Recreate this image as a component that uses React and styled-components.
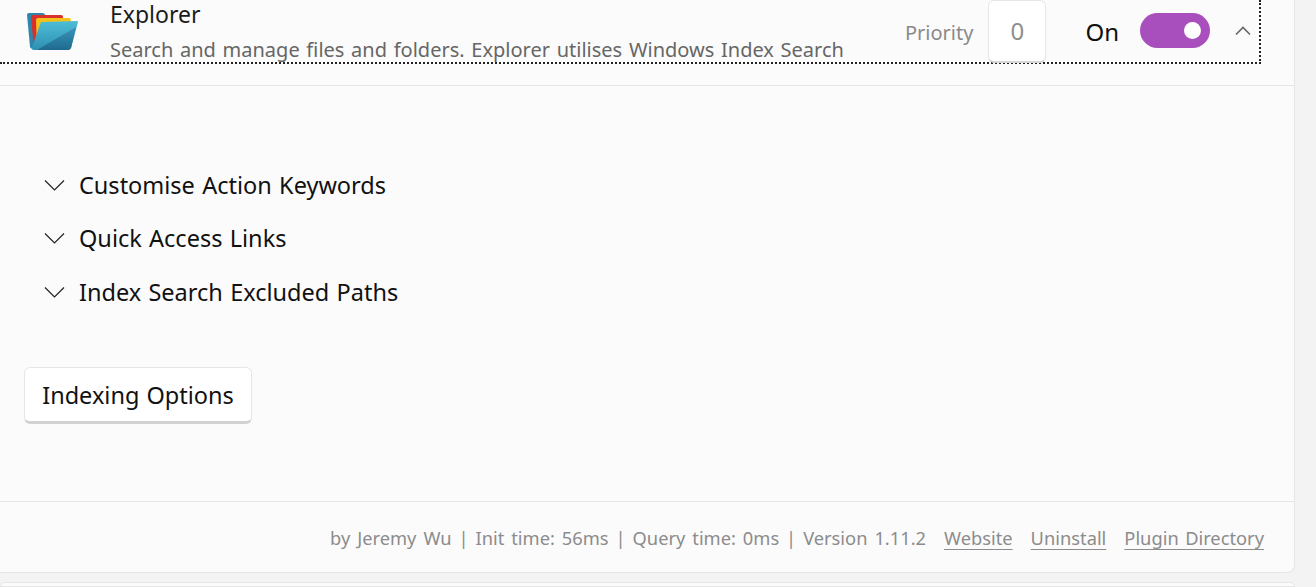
import React from 'react';
import styled, { createGlobalStyle } from 'styled-components';

const GlobalStyle = createGlobalStyle`
  html, body {
    margin: 0;
    background: #f3f3f3;
    font-family: "Noto Sans", "Noto Sans CJK KR", sans-serif;
  }
`;
const Page = styled.div`
  display: flex;
  flex-direction: column;
  height: 587px;
  overflow: hidden;
  width: 1316px;
`;
const Panel = styled.section`
  background: #fbfbfb;
  border-bottom: 1px solid #e5e5e5;
  border-bottom-right-radius: 8px;
  border-right: 1px solid #e5e5e5;
  box-sizing: border-box;
  display: flex;
  flex: none;
  flex-direction: column;
  height: 573px;
  width: 1295px;
`;
const HeaderZone = styled.div`
  border-bottom: 1px solid #e6e6e6;
  box-sizing: border-box;
  flex: none;
  height: 86px;
`;
const Header = styled.header`
  align-items: center;
  border-bottom: 2px dotted #222;
  border-right: 2px dotted #222;
  box-sizing: border-box;
  display: flex;
  height: 64px;
  padding-left: 26px;
  width: 1261px;
`;
const Info = styled.div`
  display: flex;
  flex: 1;
  flex-direction: column;
  margin-left: 32px;
  margin-top: 3px;
`;
const Title = styled.div`
  color: #1b1b1b;
  font-size: 23px;
  line-height: 30px;
  margin-bottom: 4px;
`;
const Description = styled.div`
  color: #666;
  font-size: 20px;
  line-height: 34px;
  white-space: nowrap;
  word-spacing: 1.5px;
`;
const PriorityLabel = styled.span`
  color: #8a8a8a;
  font-size: 20px;
  margin-right: 15px;
  margin-top: 3px;
`;
const PriorityBox = styled.div`
  align-items: center;
  background: #fff;
  border: 1px solid #e6e6e6;
  border-bottom: 2px solid #d6d6d6;
  border-radius: 6px;
  box-sizing: border-box;
  color: #8e8e8e;
  display: flex;
  font-size: 24px;
  height: 63px;
  justify-content: center;
  margin-right: 39px;
  width: 58px;
`;
const SwitchLabel = styled.span`
  color: #111;
  font-size: 24px;
  margin-right: 21px;
`;
const Switch = styled.div`
  align-items: center;
  background: #a94fbd;
  border-radius: 18px;
  box-sizing: border-box;
  display: flex;
  height: 35px;
  justify-content: flex-end;
  margin-top: -2px;
  padding-right: 9px;
  width: 70px;
`;
const Knob = styled.span`
  background: #fff;
  border-radius: 50%;
  height: 17px;
  width: 17px;
`;
const Collapse = styled.svg`
  display: block;
  height: 10px;
  margin: 0 8px 0 25px;
  width: 16px;
`;
const Body = styled.div`
  display: flex;
  flex: 1;
  flex-direction: column;
  padding: 72px 0 0 24px;
`;
const ExpanderRow = styled.div`
  align-items: center;
  color: #111;
  display: flex;
  font-size: 23.5px;
  height: 53.5px;
  word-spacing: 1.2px;
`;
const Chevron = styled.svg`
  display: block;
  flex: none;
  height: 12px;
  margin: 0 14px 0 20px;
  width: 21px;
`;
const IndexButton = styled.button`
  background: #fff;
  border: 1px solid #e6e6e6;
  border-bottom: 3px solid #d2d2d2;
  border-radius: 6px;
  box-sizing: border-box;
  color: #111;
  font-family: inherit;
  font-size: 23.5px;
  height: 57px;
  margin-top: 48.5px;
  padding: 0;
  width: 228px;
  word-spacing: 1px;
`;
const Footer = styled.footer`
  align-items: center;
  border-top: 1px solid #e6e6e6;
  box-sizing: border-box;
  color: #8c8c8c;
  display: flex;
  flex: none;
  font-size: 18.3px;
  height: 71px;
  justify-content: flex-end;
  padding-right: 30px;
  padding-top: 1px;
  word-spacing: 1.7px;
`;
const FooterStats = styled.span`
  word-spacing: 2.2px;
`;
const FooterLink = styled.a`
  color: #8c8c8c;
  margin-left: 18px;
  text-decoration: underline;
  text-underline-offset: 4px;
`;
const NextCard = styled.div`
  background: #fbfbfb;
  border: 1px solid #e5e5e5;
  border-radius: 8px 8px 0 0;
  box-sizing: border-box;
  height: 20px;
  margin-top: 9px;
  width: 1295px;
`;

const FolderIcon = () => (
  <svg width="52" height="40" viewBox="0 0 52 40" style={{ flex: 'none' }}>
    <defs>
      <linearGradient id="front" x1="0" y1="0" x2="0" y2="1">
        <stop offset="0" stopColor="#4dbdd6" />
        <stop offset="1" stopColor="#2f8fb4" />
      </linearGradient>
      <linearGradient id="shade" x1="0" y1="0" x2="0" y2="1">
        <stop offset="0" stopColor="#3a95b8" />
        <stop offset="1" stopColor="#1f6a90" />
      </linearGradient>
    </defs>
    <path d="M1 4q0-2 2-2h13q3 0 3 2v34H7q-2 0-3-2z" fill="#2f86ad" />
    <path d="M5 6q0-2 2-2h28q2 0 2 2v12H12L8 38z" fill="#d9302c" />
    <path d="M10 9q0-2 2-2h31q2 0 2 3v8H15l-4 20z" fill="#f5c21a" />
    <path d="M15 11l36-1q1 0 1 1l-7 26q-1 2-3 2H8q-3 0-2-3z" fill="url(#front)" />
    <path d="M11 39L50 16l-5 21q-1 2-3 2z" fill="url(#shade)" />
  </svg>
);

const ChevronDown = () => (
  <Chevron viewBox="0 0 21 12" fill="none" stroke="#222" strokeWidth="1.2">
    <path d="M1 1.5l9.5 9.5 9.5-9.5" />
  </Chevron>
);

const EXPANDERS = ['Customise Action Keywords', 'Quick Access Links', 'Index Search Excluded Paths'];

export default function App() {
  return (
    <>
      <GlobalStyle />
      <Page>
        <Panel>
          <HeaderZone>
            <Header>
              <FolderIcon />
              <Info>
                <Title>Explorer</Title>
                <Description>Search and manage files and folders. Explorer utilises Windows Index Search</Description>
              </Info>
              <PriorityLabel>Priority</PriorityLabel>
              <PriorityBox>0</PriorityBox>
              <SwitchLabel>On</SwitchLabel>
              <Switch><Knob /></Switch>
              <Collapse viewBox="0 0 16 10" fill="none" stroke="#666" strokeWidth="1.6">
                <path d="M1 8.5l7-7 7 7" />
              </Collapse>
            </Header>
          </HeaderZone>
          <Body>
            {EXPANDERS.map((label) => (
              <ExpanderRow key={label}>
                <ChevronDown />
                {label}
              </ExpanderRow>
            ))}
            <div><IndexButton>Indexing Options</IndexButton></div>
          </Body>
          <Footer>
            <FooterStats>by Jeremy Wu | Init time: 56ms | Query time: 0ms | Version 1.11.2</FooterStats>
            <FooterLink>Website</FooterLink>
            <FooterLink>Uninstall</FooterLink>
            <FooterLink>Plugin Directory</FooterLink>
          </Footer>
        </Panel>
        <NextCard />
      </Page>
    </>
  );
}
